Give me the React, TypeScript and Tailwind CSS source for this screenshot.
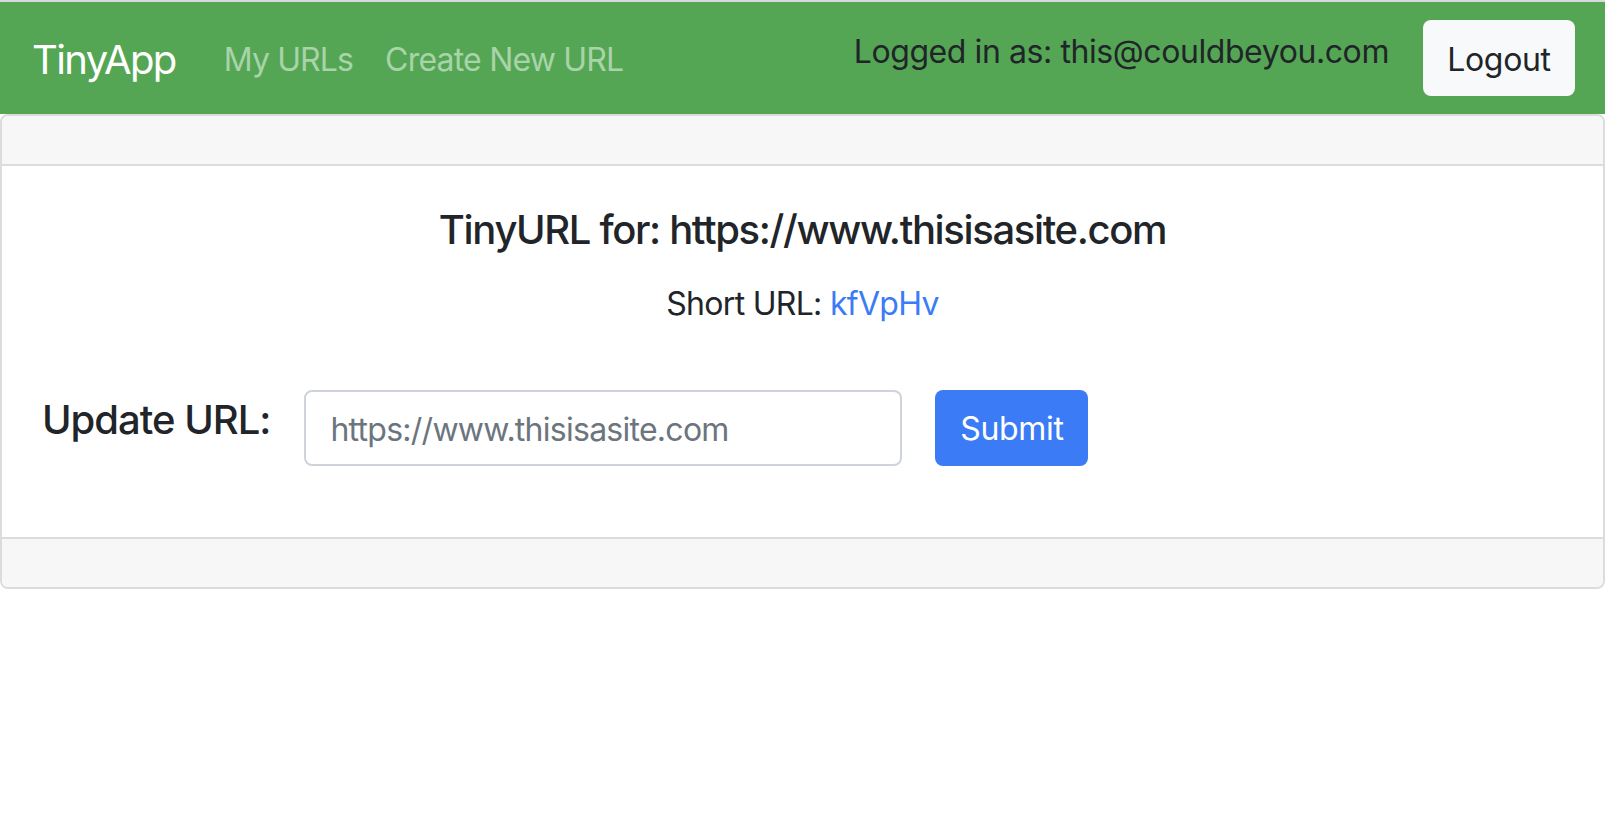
import { useState } from 'react';

const font = "font-['Inter','Liberation_Sans',sans-serif]";

function Navbar() {
  return (
    <nav className="flex h-[114px] items-center border-t-2 border-[#dadada] bg-[#54a654] pl-[32px] pr-[30px]">
      <a href="#" className="mr-[48px] pt-[4px] text-[40px] leading-[60px] tracking-[-0.04em] text-white">
        TinyApp
      </a>
      <a href="#" className="mr-[32px] pt-[4px] text-[32px] leading-[48px] tracking-[-0.027em] text-[#a9d3a9]">
        My URLs
      </a>
      <a href="#" className="pt-[4px] text-[32px] leading-[48px] tracking-[-0.025em] text-[#a9d3a9]">
        Create New URL
      </a>

      <div className="ml-auto flex items-center">
        <span className="mb-[12px] mr-[34px] text-[32px] leading-[48px] tracking-[-0.013em] text-[#212529]">
          Logged in as: this@couldbeyou.com
        </span>
        <button className="h-[76px] w-[152px] rounded-[8px] bg-[#f8f9fa] pt-[4px] text-[32px] leading-[48px] tracking-[-0.01em] text-[#212529]">
          Logout
        </button>
      </div>
    </nav>
  );
}

export default function App() {
  const [longURL, setLongURL] = useState('');

  return (
    <div className={`min-h-screen bg-white ${font}`}>
      <Navbar />

      {/* URL card */}
      <div className="w-full overflow-hidden rounded-[8px] border-2 border-[#dcdcdc]">
        <div className="h-[50px] border-b-2 border-[#dcdcdc] bg-[#f7f7f7]" />

        <div className="px-[40px] pb-[71px] pt-[40px]">
          <h5 className="text-center text-[40px] font-medium leading-[48px] tracking-[-0.034em] text-[#212529]">
            TinyURL for: https://www.thisisasite.com
          </h5>
          <p className="mt-[26px] text-center text-[32px] leading-[48px] tracking-[-0.022em] text-[#212529]">
            Short URL: <a href="#" className="text-[#3b7cf6]">kfVpHv</a>
          </p>

          <form className="mt-[62px] flex items-start" onSubmit={(e) => e.preventDefault()}>
            <label className="mt-[6px] text-[40px] font-medium leading-[48px] tracking-[-0.025em] text-[#212529]">
              Update URL:
            </label>
            <input
              type="text"
              value={longURL}
              onChange={(e) => setLongURL(e.target.value)}
              placeholder="https://www.thisisasite.com"
              className="ml-[34px] h-[76px] w-[598px] rounded-[8px] border-2 border-[#ced4da] px-[24px] pt-[2px] text-[32px] tracking-[-0.023em] text-[#495057] outline-none placeholder:text-[#6c757d]"
            />
            <button
              type="submit"
              className="ml-[33px] h-[76px] w-[153px] rounded-[8px] bg-[#3b7cf6] pt-[2px] text-[32px] leading-[48px] tracking-[-0.01em] text-white"
            >
              Submit
            </button>
          </form>
        </div>

        <div className="h-[50px] border-t-2 border-[#dcdcdc] bg-[#f7f7f7]" />
      </div>
    </div>
  );
}
